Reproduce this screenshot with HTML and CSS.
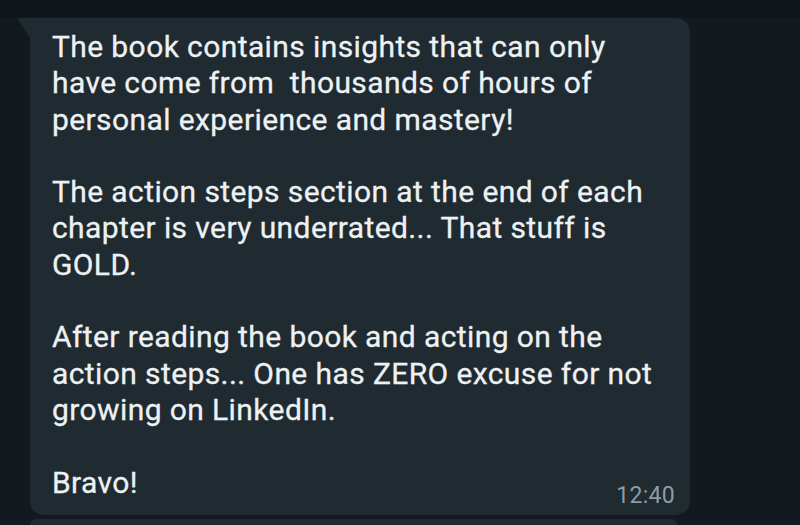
FILE: index.html
```html
<!DOCTYPE html>
<html>
<head>
<meta charset="utf-8">
<link rel="stylesheet" href="styles.css">
</head>
<body>
<div class="topband"></div>
<div class="chat">
  <div class="bubble">
    <p class="para">The book contains insights that can only<br>have come from&nbsp; thousands of hours of<br>personal experience and mastery!</p>
    <p class="para">The action steps section at the end of each<br>chapter is very underrated... That stuff is<br>GOLD.</p>
    <p class="para">After reading the book and acting on the<br>action steps... One has ZERO excuse for not<br>growing on LinkedIn.</p>
    <div class="footer">
      <p class="para last">Bravo!</p>
      <span class="time">12:40</span>
    </div>
  </div>
  <div class="bubble next"></div>
</div>
</body>
</html>
```

FILE: styles.css
```css
html, body {
  margin: 0;
  padding: 0;
  height: 100%;
  background: #121a20;
  overflow: hidden;
}
body {
  font-family: Roboto, "Noto Sans", sans-serif;
  display: flex;
  flex-direction: column;
}
.topband {
  height: 17px;
  background: #0e1419;
  flex: none;
}
.chat {
  display: flex;
  flex-direction: column;
  gap: 4px;
  padding: 1px 0 0 30px;
}
.bubble {
  position: relative;
  width: 660px;
  box-sizing: border-box;
  background: #1f2a31;
  border-radius: 0 14px 14px 14px;
  padding: 11px 16px 8px 22px;
  color: #eef1f3;
  font-size: 30px;
  font-weight: 400;
  letter-spacing: 0.4px;
  line-height: 36.3px;
  -webkit-text-stroke: 0.3px #eef1f3;
}
.bubble::before {
  content: "";
  position: absolute;
  left: -13px;
  top: 0;
  width: 13px;
  height: 20px;
  background: #1f2a31;
  clip-path: polygon(0 0, 100% 0, 100% 100%);
  border-top-left-radius: 2px;
}
.para {
  margin: 0 0 36.3px 0;
}
.footer {
  display: flex;
  justify-content: space-between;
  align-items: flex-end;
}
.para.last {
  margin: 0 0 6px 0;
}
.time {
  color: #8f9ba3;
  font-size: 23px;
  font-weight: 400;
  letter-spacing: 0.3px;
  line-height: 22px;
  margin-right: -1px;
  -webkit-text-stroke: 0;
}
.bubble.next {
  width: 647px;
  height: 6px;
  padding: 0;
  border-radius: 14px 14px 0 0;
}
.bubble.next::before {
  display: none;
}
```
